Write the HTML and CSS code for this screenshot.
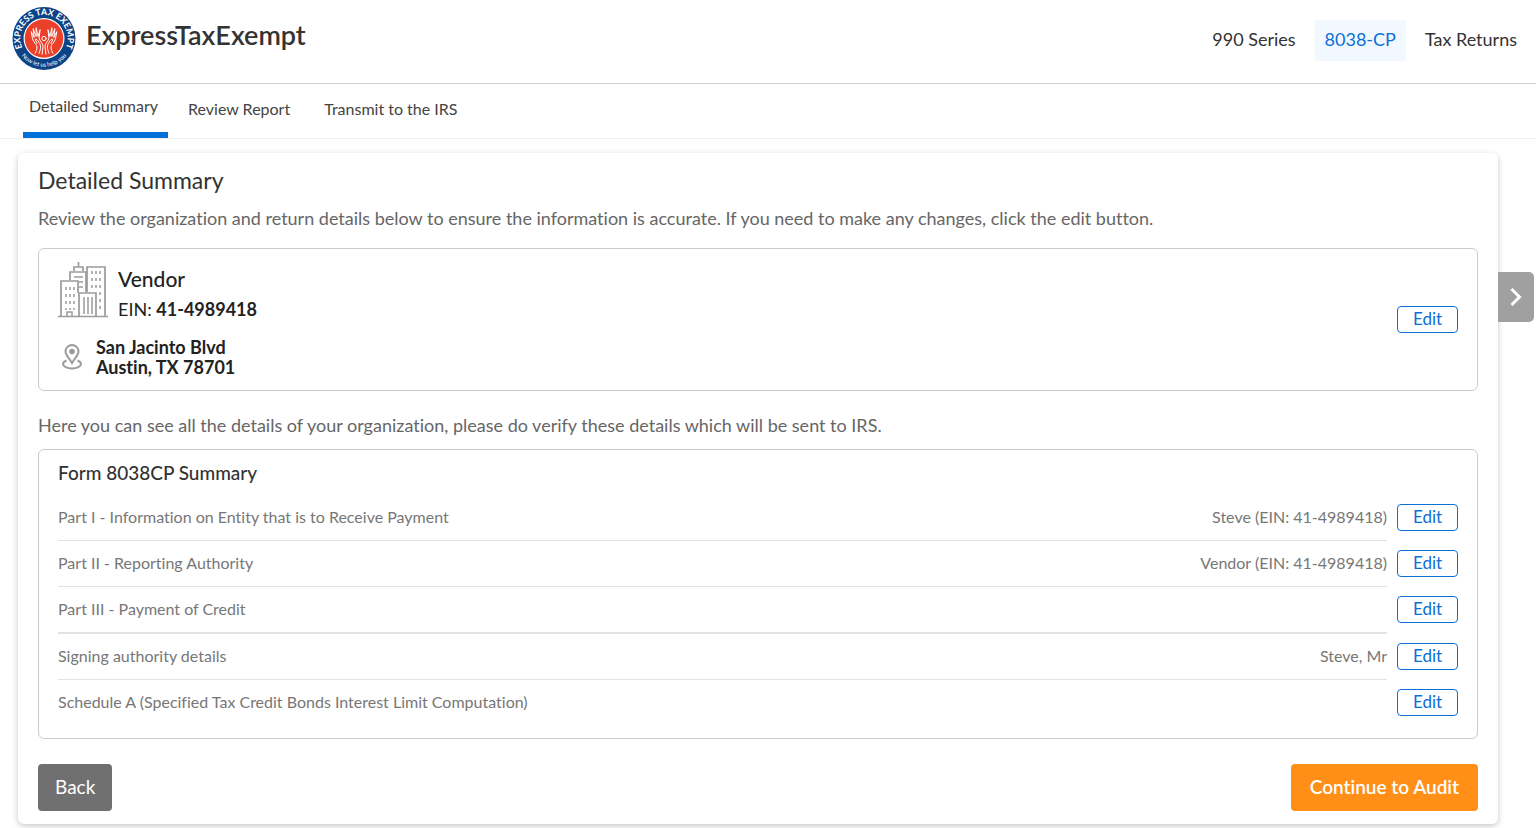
FILE: index.html
```html
<!DOCTYPE html>
<html lang="en">
<head>
<meta charset="utf-8">
<meta name="viewport" content="width=device-width, initial-scale=1">
<title>ExpressTaxExempt - Detailed Summary</title>
<link rel="stylesheet" href="styles.css">
</head>
<body>
<header class="header">
  <a class="brand" href="#">
    <svg class="brand-logo" viewBox="0 0 64 64" aria-hidden="true">
      <defs>
        <path id="arc-top" d="M12.300 45.800A24 24 0 1 1 51.700 45.800"/>
        <path id="arc-bottom" d="M6 44A28.600 28.600 0 0 0 58 44"/>
      </defs>
      <circle cx="32" cy="32" r="32" fill="#0c4387"/>
      <circle cx="32" cy="32" r="20.800" fill="#fff"/>
      <circle cx="32" cy="32" r="19.600" fill="#ea4029"/>
      <text class="logo-top"><textPath href="#arc-top" startOffset="50%" text-anchor="middle">EXPRESS TAX EXEMPT</textPath></text>
      <text class="logo-bottom"><textPath href="#arc-bottom" startOffset="50%" text-anchor="middle">Now let us help you</textPath></text>
      <g fill="none" stroke="#fff" stroke-width="1" stroke-linecap="round" stroke-linejoin="round">
        <path d="M23 47c2-4 3-7 0-10-3-3-3-7-4-12l3 6-1-9 3 8 0-9 2 9 2-7-1 9c1 3 4 5 4 8 0 3-1 6-1 8M27 47c2-5 2-8 0-11-2-3-3-4-4-3l2 4"/>
        <path d="M41 47c-2-4-3-7 0-10 3-3 3-7 4-12l-3 6 1-9-3 8 0-9-2 9-2-7 1 9c-1 3-4 5-4 8 0 3 1 6 1 8M37 47c-2-5-2-8 0-11 2-3 3-4 4-3l-2 4"/>
        <circle cx="32" cy="32" r="2.200"/>
      </g>
    </svg>
    <span class="brand-name">ExpressTaxExempt</span>
  </a>
  <nav class="main-nav" aria-label="Main">
    <a class="nav-link" href="#">990 Series</a>
    <a class="nav-link nav-link-active" href="#">8038-CP</a>
    <a class="nav-link" href="#">Tax Returns</a>
  </nav>
</header>

<nav class="tabs" aria-label="Steps">
  <a class="tab tab-active" href="#" aria-current="page">Detailed Summary</a>
  <a class="tab" href="#">Review Report</a>
  <a class="tab" href="#">Transmit to the IRS</a>
</nav>

<main class="card">
  <h1 class="title">Detailed Summary</h1>
  <p class="lead">Review the organization and return details below to ensure the information is accurate. If you need to make any changes, click the edit button.</p>

  <section class="panel vendor">
    <div class="vendor-info">
      <div class="vendor-head">
        <svg class="icon-building" viewBox="0 0 50 56" fill="none" stroke="#9b9b9b" stroke-width="1.700" aria-hidden="true">
          <path d="M0 54.500h50M3 54V19h17v12M12 18V10h16v20M16 9V5h9v4M20.500 5V0M29 30V5h18v49"/>
          <path d="M21 54V31h17v23"/>
          <path d="M16 15h9M21 20h4M21 25h4" stroke-width="1.500"/>
          <path d="M26 35v17M30 35v17M34 35v17" stroke-width="1.500"/>
          <path d="M9 54v-4h5v4" stroke-width="1.500"/>
          <path d="M8 25v23M12 25v23M16 25v23" stroke-dasharray="3 4" stroke-width="1.500"/>
          <path d="M34 9v18M38 9v18M42 9v42" stroke-dasharray="3 4" stroke-width="1.500"/>
        </svg>
        <div>
          <h2 class="vendor-name">Vendor</h2>
          <p class="vendor-ein">EIN: <strong>41-4989418</strong></p>
        </div>
      </div>
      <div class="vendor-address">
        <svg class="icon-pin" viewBox="0 0 20 26" fill="none" stroke="#9b9b9b" stroke-width="2" aria-hidden="true">
          <path d="M10 19C7 14 3.500 11 3.500 7.500a6.500 6.500 0 0 1 13 0C16.500 11 13 14 10 19z"/>
          <circle cx="10" cy="7.500" r="1.800" fill="#9b9b9b"/>
          <path d="M4.500 16.500C2 17.500 1 18.500 1 20c0 2.500 4 4.500 9 4.500s9-2 9-4.500c0-1.500-1-2.500-3.500-3.500"/>
        </svg>
        <address class="address">San Jacinto Blvd<br>Austin, TX 78701</address>
      </div>
    </div>
    <button class="edit" type="button" aria-label="Edit vendor">Edit</button>
  </section>

  <p class="lead">Here you can see all the details of your organization, please do verify these details which will be sent to IRS.</p>

  <section class="panel summary">
    <h2 class="summary-title">Form 8038CP Summary</h2>
    <table class="summary-table">
      <tbody>
        <tr><th scope="row">Part I - Information on Entity that is to Receive Payment</th><td>Steve (EIN: 41-4989418)</td><td class="action"><button class="edit" type="button">Edit</button></td></tr>
        <tr><th scope="row">Part II - Reporting Authority</th><td>Vendor (EIN: 41-4989418)</td><td class="action"><button class="edit" type="button">Edit</button></td></tr>
        <tr class="group-end"><th scope="row">Part III - Payment of Credit</th><td></td><td class="action"><button class="edit" type="button">Edit</button></td></tr>
        <tr><th scope="row">Signing authority details</th><td>Steve, Mr</td><td class="action"><button class="edit" type="button">Edit</button></td></tr>
        <tr><th scope="row">Schedule A (Specified Tax Credit Bonds Interest Limit Computation)</th><td></td><td class="action"><button class="edit" type="button">Edit</button></td></tr>
      </tbody>
    </table>
  </section>

  <div class="actions">
    <button class="button button-back" type="button">Back</button>
    <button class="button button-next" type="button">Continue to Audit</button>
  </div>
</main>

<button class="drawer-toggle" type="button" aria-label="Open side panel">
  <svg class="icon-chevron" viewBox="0 0 12 20" fill="none" stroke="#fff" stroke-width="3" aria-hidden="true"><path d="M1.500 2L9.500 10l-8 8"/></svg>
</button>
</body>
</html>
```
FILE: styles.css
```css
* {
  box-sizing: border-box;
}

body {
  margin: 0;
  background: #fff;
  color: #333;
  font-family: Lato, "Liberation Sans", sans-serif;
  font-size: 16px;
  font-variant-ligatures: none;
}

h1, h2, p {
  margin: 0;
}

a {
  color: inherit;
  text-decoration: none;
}

button {
  font-family: inherit;
  font-variant-ligatures: none;
  cursor: pointer;
}

.header {
  display: flex;
  justify-content: space-between;
  align-items: flex-start;
  padding: 7px 9px 13px 12px;
  border-bottom: 1px solid #d0d0d0;
}

.brand {
  display: flex;
  gap: 10px;
}

.brand-logo {
  width: 64px;
  height: 63px;
}

.logo-top {
  fill: #fff;
  font-size: 9px;
  font-weight: 700;
}

.logo-bottom {
  fill: #fff;
  font-size: 6px;
}

.brand-name {
  font-size: 27px;
  font-weight: 600;
  line-height: 56px;
}

.main-nav {
  display: flex;
  gap: 9px;
  padding-top: 13px;
}

.nav-link {
  padding: 0 10px 2px;
  font-size: 18px;
  line-height: 39px;
}

.nav-link-active {
  background: #f2f8ff;
  color: #0b6fd8;
}

.tabs {
  display: flex;
  align-items: flex-start;
  gap: 6px;
  padding-left: 23px;
  border-bottom: 1px solid #f0f0f0;
}

.tab {
  padding: 0 14px;
  color: #444;
  font-size: 16px;
  line-height: 50px;
}

.tab-active {
  padding: 0 10px 4px 6px;
  border-bottom: 6px solid #0070d8;
  line-height: 44px;
}

.card {
  margin: 14px 38px 4px 18px;
  padding: 11px 20px 13px;
  border-radius: 6px;
  box-shadow: 0 2px 6px rgba(0, 0, 0, 0.22);
}

.title {
  font-size: 23px;
  font-weight: 400;
  line-height: 32px;
}

.lead {
  padding: 19px 0 9px;
  color: #666;
  font-size: 18px;
  line-height: 30px;
}

.title + .lead {
  padding: 7px 0 15px;
}

.panel {
  border: 1px solid #ccc;
  border-radius: 6px;
}

.vendor {
  display: flex;
  justify-content: space-between;
  align-items: center;
  padding: 13px 19px;
  color: #222;
}

.vendor-head {
  display: flex;
  gap: 10px;
}

.icon-building {
  width: 50px;
  height: 56px;
}

.vendor-name {
  padding-top: 3px;
  font-size: 21px;
  font-weight: 500;
  line-height: 28px;
}

.vendor-ein {
  font-size: 18px;
  line-height: 32px;
}

.vendor-address {
  display: flex;
  align-items: center;
  gap: 14px;
  padding: 12px 0 0 4px;
}

.icon-pin {
  width: 20px;
  height: 26px;
}

.address {
  font-size: 18px;
  font-style: normal;
  font-weight: 700;
  line-height: 20px;
}

.edit {
  width: 61px;
  height: 27px;
  padding: 0 0 2px;
  border: 1px solid #0b6fd8;
  border-radius: 4px;
  background: #fff;
  color: #0b6fd8;
  font-size: 17px;
  line-height: 23px;
}

.summary {
  padding: 8px 19px 12px;
}

.summary-title {
  font-size: 19px;
  font-weight: 500;
  line-height: 30px;
}

.summary-table {
  width: 100%;
  margin-top: 7px;
  border-collapse: separate;
  border-spacing: 0;
  color: #777;
}

.summary-table th,
.summary-table td {
  height: 46px;
  padding: 0 0 3px;
  border-bottom: 1px solid #e2e2e2;
  font-size: 16px;
  font-weight: 400;
  text-align: left;
}

.summary-table .group-end > * {
  height: 47px;
  border-bottom-width: 2px;
}

.summary-table td {
  text-align: right;
}

.summary-table .action {
  width: 71px;
  padding: 0;
  border-bottom-color: transparent;
}

.summary-table tr:last-child > * {
  border-bottom-color: transparent;
}

.actions {
  display: flex;
  justify-content: space-between;
  padding-top: 25px;
}

.button {
  padding: 0 17px 2px;
  border: 0;
  border-radius: 4px;
  color: #fff;
  font-size: 19px;
  line-height: 45px;
}

.button-back {
  background: #707070;
}

.button-next {
  padding-right: 19px;
  padding-left: 19px;
  background: #ff8f17;
  font-weight: 600;
}

.drawer-toggle {
  position: absolute;
  top: 272px;
  right: 2px;
  display: flex;
  justify-content: center;
  align-items: center;
  width: 36px;
  height: 50px;
  padding: 0;
  border: 0;
  border-radius: 0 5px 5px 0;
  background: #a0a0a0;
}

.icon-chevron {
  width: 12px;
  height: 20px;
}
```
